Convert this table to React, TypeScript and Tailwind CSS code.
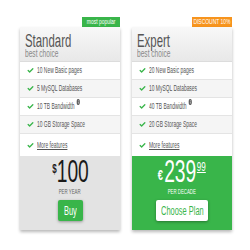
import { Check } from "lucide-react"

type Plan = {
  name: string
  badge: string
  features: string[]
  currency: string
  amount: string
  cents?: string
  period: string
  cta: string
  featured: boolean
}

const plans: Plan[] = [
  {
    name: "Standard",
    badge: "most popular",
    features: ["10 New Basic pages", "5 MySQL Databases", "10 TB Bandwidth", "10 GB Storage Space"],
    currency: "$",
    amount: "100",
    period: "PER YEAR",
    cta: "Buy",
    featured: false,
  },
  {
    name: "Expert",
    badge: "DISCOUNT 10%",
    features: ["20 New Basic pages", "10 MySQL Databases", "40 TB Bandwidth", "20 GB Storage Space"],
    currency: "€",
    amount: "239",
    cents: "99",
    period: "PER DECADE",
    cta: "Choose Plan",
    featured: true,
  },
]

const font = { fontFamily: '"Liberation Sans", Arial, sans-serif' }

const InfoDot = () => (
  <svg width="6" height="6" viewBox="0 0 10 10" className="inline-block align-top ml-[3px] mt-[-1px]">
    <circle cx="5" cy="5" r="5" fill="#555" />
    <rect x="4.2" y="4.2" width="1.6" height="3.6" fill="#fff" />
    <rect x="4.2" y="2" width="1.6" height="1.5" fill="#fff" />
  </svg>
)

const Card = ({ plan }: { plan: Plan }) => {
  return (
    <div className="w-[100px] flex flex-col">
      <div className="flex justify-end h-[10px]">
        <div
          className={`${plan.featured ? "bg-[#f7941d] w-[40px]" : "bg-[#39b54a] w-[38px]"} h-[10px] flex justify-center overflow-hidden`}
        >
          <span className="inline-block text-white text-[8px] leading-[10px] whitespace-nowrap scale-x-[0.62] origin-center">
            {plan.badge}
          </span>
        </div>
      </div>
      <div className="shadow-[0_2px_3px_rgba(0,0,0,0.28)]">
        <div className="h-[35px] px-[5px] pt-[5px] bg-gradient-to-b from-[#f8f8f8] to-[#e8e8e8] border-b border-[#dcdcdc]">
          <div className="text-[19px] leading-[17px] text-[#555]">
            <span className="inline-block whitespace-nowrap scale-x-[0.6] origin-left">{plan.name}</span>
          </div>
          <div className="text-[11px] leading-[9px] text-[#888]">
            <span className="inline-block whitespace-nowrap scale-x-[0.6] origin-left">best choice</span>
          </div>
        </div>
        {plan.features.map((f, i) => (
          <div
            key={f}
            className={`h-[18px] flex items-center pl-[7px] border-b border-[#e4e4e4] text-[8.5px] text-[#555] ${i % 2 ? "bg-[#f5f5f5]" : "bg-white"}`}
          >
            <Check size={7} strokeWidth={4.5} className="text-[#39b54a] shrink-0" />
            <span className="ml-[3px] inline-block whitespace-nowrap scale-x-[0.58] origin-left">
              {f}
              {i === 2 && <InfoDot />}
            </span>
          </div>
        ))}
        <div className="h-[22px] flex items-center pl-[7px] bg-white text-[8.5px] text-[#555]">
          <Check size={7} strokeWidth={4.5} className="text-[#39b54a] shrink-0" />
          <span className="ml-[3px] inline-block whitespace-nowrap underline scale-x-[0.58] origin-left">More features</span>
        </div>
        <div
          className={`h-[74px] flex flex-col items-center pt-[4px] ${plan.featured ? "bg-[#39b54a] text-white" : "bg-[#e3e3e3] text-[#1a1a1a]"}`}
        >
          <div className="flex items-start scale-x-[0.62] origin-center h-[24px]">
            {plan.featured ? (
              <span className="text-[15px] leading-none font-bold mt-[7px] mr-[2px]">{plan.currency}</span>
            ) : (
              <span className="text-[13px] leading-none font-bold mt-[2px]">{plan.currency}</span>
            )}
            <span className="text-[31px] leading-[24px]">{plan.amount}</span>
            {plan.cents && <span className="text-[13px] leading-none underline ml-[1px]">{plan.cents}</span>}
          </div>
          <div className={`mt-[4px] text-[7px] leading-[7px] ${plan.featured ? "text-white" : "text-[#666]"}`}>
            <span className="inline-block whitespace-nowrap scale-x-[0.62] origin-center">{plan.period}</span>
          </div>
          <button
            className={`mt-[5px] h-[21px] flex items-center justify-center rounded-[2px] shadow-[0_1px_3px_rgba(0,0,0,0.35)] ${plan.featured ? "w-[52px] bg-white text-[#39b54a]" : "w-[25px] bg-[#39b54a] text-white"}`}
          >
            <span className="inline-block text-[12px] whitespace-nowrap scale-x-[0.62] origin-center">{plan.cta}</span>
          </button>
        </div>
      </div>
    </div>
  )
}

export default function App() {
  return (
    <div className="w-[250px] h-[250px] bg-white pt-[17px] pl-[20px] flex gap-[12px]" style={font}>
      {plans.map((p) => (
        <Card key={p.name} plan={p} />
      ))}
    </div>
  )
}
